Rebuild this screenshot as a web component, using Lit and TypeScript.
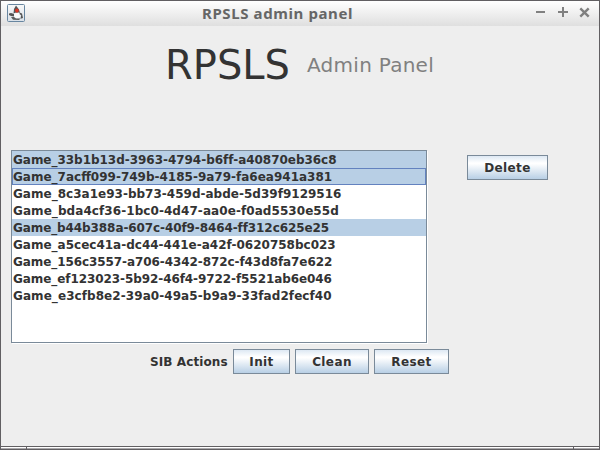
import { LitElement, html, css } from "lit";
import { customElement, property } from "lit/decorators.js";
import { styleMap } from "lit/directives/style-map.js";

interface Game {
  id: string;
  tracking: number;
  selected?: boolean;
  focused?: boolean;
}

const GAMES: Game[] = [
  { id: "Game_33b1b13d-3963-4794-b6ff-a40870eb36c8", tracking: -0.03, selected: true },
  { id: "Game_7acff099-749b-4185-9a79-fa6ea941a381", tracking: 0, selected: true, focused: true },
  { id: "Game_8c3a1e93-bb73-459d-abde-5d39f9129516", tracking: 0.015 },
  { id: "Game_bda4cf36-1bc0-4d47-aa0e-f0ad5530e55d", tracking: 0.07 },
  { id: "Game_b44b388a-607c-40f9-8464-ff312c625e25", tracking: -0.095, selected: true },
  { id: "Game_a5cec41a-dc44-441e-a42f-0620758bc023", tracking: 0 },
  { id: "Game_156c3557-a706-4342-872c-f43d8fa7e622", tracking: -0.08 },
  { id: "Game_ef123023-5b92-46f4-9722-f5521ab6e046", tracking: -0.08 },
  { id: "Game_e3cfb8e2-39a0-49a5-b9a9-33fad2fecf40", tracking: 0.07 },
];

@customElement("metal-button")
class MetalButton extends LitElement {
  @property() label = "";
  static styles = css`
    :host { display: block; height: 25px; }
    .btn {
      box-sizing: border-box; width: 100%; height: 25px; padding: 1px 0 0; margin: 0;
      border: 1px solid #7a8a99; border-radius: 0; color: #333;
      background: linear-gradient(#dde8f3 0%, #fff 30%, #fff 34%, #b8cfe5 100%);
      font: bold 12px/22px "DejaVu Sans", sans-serif; letter-spacing: 0.4px;
      display: block; text-align: center;
    }
  `;
  render() {
    return html`<button class="btn">${this.label}</button>`;
  }
}

@customElement("title-bar")
class TitleBar extends LitElement {
  static styles = css`
    :host { display: block; }
    .bar { display: flex; height: 25px; background: linear-gradient(#fff, #dfdfdf); }
    .icon { margin: 3px 0 0 6px; width: 18px; height: 18px; }
    .title {
      font: bold 15px/25px "Noto Sans", sans-serif; color: #666; letter-spacing: 0.6px;
      margin-left: 177px; white-space: pre;
    }
    .controls { width: 64px; height: 25px; margin-left: auto; }
  `;
  render() {
    return html`<div class="bar">
      <svg class="icon" viewBox="0 0 18 18">
        <defs>
          <linearGradient id="g" x1="0" y1="0" x2="0" y2="1">
            <stop offset="0" stop-color="#f8f8f8" /><stop offset="1" stop-color="#d9e0e8" />
          </linearGradient>
        </defs>
        <rect x=".5" y=".5" width="17" height="17" rx="1" fill="url(#g)" stroke="#6886a0" />
        <path d="M2 9.5L4 9L7 10L7 12.5L4 12L2 11Z" fill="#555" />
        <path d="M9 1.5L12 5.5L13 9L9 8.5L6.5 9.5L7 5Z" fill="#555" />
        <path d="M7 9.5L12.5 8.5L13 13L11 14.5L7.5 13.5Z" fill="#fafafa" />
        <path d="M12.5 8.5L15 9.5L16 14L13.5 14.8L14.2 11L12.8 10.5Z" fill="#555" />
        <path d="M4 13L7 13L9 14.5L13.5 14.5L12 16L6 15.8Z" fill="#5c5c5c" />
        <ellipse cx="9.9" cy="6.6" rx="1.8" ry="2.1" fill="#dc3524" />
      </svg>
      <span class="title">RPSLS admin panel</span>
      <svg class="controls" viewBox="0 0 64 25">
        <path d="M1 11H10M23 11H33M28 6V16" fill="none" stroke="#808080" stroke-width="2" />
        <path d="M45.3 7.3L53.7 15.7M53.7 7.3L45.3 15.7" fill="none" stroke="#808080" stroke-width="2.4" />
      </svg>
    </div>`;
  }
}

@customElement("app-root")
class AppRoot extends LitElement {
  static styles = css`
    :host { display: block; width: 600px; height: 450px; }
    .window {
      box-sizing: border-box; width: 600px; height: 450px; overflow: hidden;
      border: 1px solid #615f62; background: #eee; color: #333;
      display: flex; flex-direction: column;
      font: bold 12px/17px "DejaVu Sans", sans-serif;
    }
    .header { display: flex; height: 124px; padding-left: 164px; font-weight: normal; }
    .brand { font-size: 40px; line-height: 47px; margin-top: 16px; width: 142px; white-space: pre; }
    .sub { font-size: 20px; line-height: 24px; margin-top: 27px; color: #808080; letter-spacing: 0.27px; white-space: pre; }
    .main { display: flex; gap: 39px; padding-left: 10px; height: 194px; }
    .list {
      box-sizing: border-box; width: 416px; height: 193px; background: #fff;
      border: 1px solid #7a8a99; box-shadow: 1px 1px 0 #fff; margin-right: 1px;
    }
    .row { box-sizing: border-box; height: 17px; line-height: 19px; padding-left: 1px; white-space: pre; }
    .selected { background: #b8cfe5; }
    .focused { border: 1px solid #6382bf; line-height: 17px; padding-left: 0; }
    .delete { width: 81px; margin-top: 5px; }
    .actions { display: flex; gap: 5px; padding: 5px 0 0 149px; flex: 1; }
    .label { width: 78px; line-height: 27px; letter-spacing: 0.1px; white-space: pre; }
    .init { width: 57px; }
    .clean { width: 74px; }
    .reset { width: 75px; }
    .grip { display: flex; flex: none; height: 2px; border-top: 1px solid #615f62; gap: 1px; background: #615f62; }
    .seg { background: linear-gradient(#fff 50%, #aaa8ab 50%); }
    .corner { width: 25px; }
    .middle { flex: 1; }
  `;
  render() {
    return html`<div class="window">
      <title-bar></title-bar>
      <div class="header"><span class="brand">RPSLS</span><span class="sub">Admin Panel</span></div>
      <div class="main">
        <div class="list">
          ${GAMES.map((g) => html`<div
            class="row ${g.selected ? "selected" : ""} ${g.focused ? "focused" : ""}"
            style=${styleMap({ letterSpacing: `${g.tracking}px` })}>${g.id}</div>`)}
        </div>
        <metal-button class="delete" label="Delete"></metal-button>
      </div>
      <div class="actions">
        <span class="label">SIB Actions</span>
        <metal-button class="init" label="Init"></metal-button>
        <metal-button class="clean" label="Clean"></metal-button>
        <metal-button class="reset" label="Reset"></metal-button>
      </div>
      <div class="grip"><div class="seg corner"></div><div class="seg middle"></div><div class="seg corner"></div></div>
    </div>`;
  }
}
